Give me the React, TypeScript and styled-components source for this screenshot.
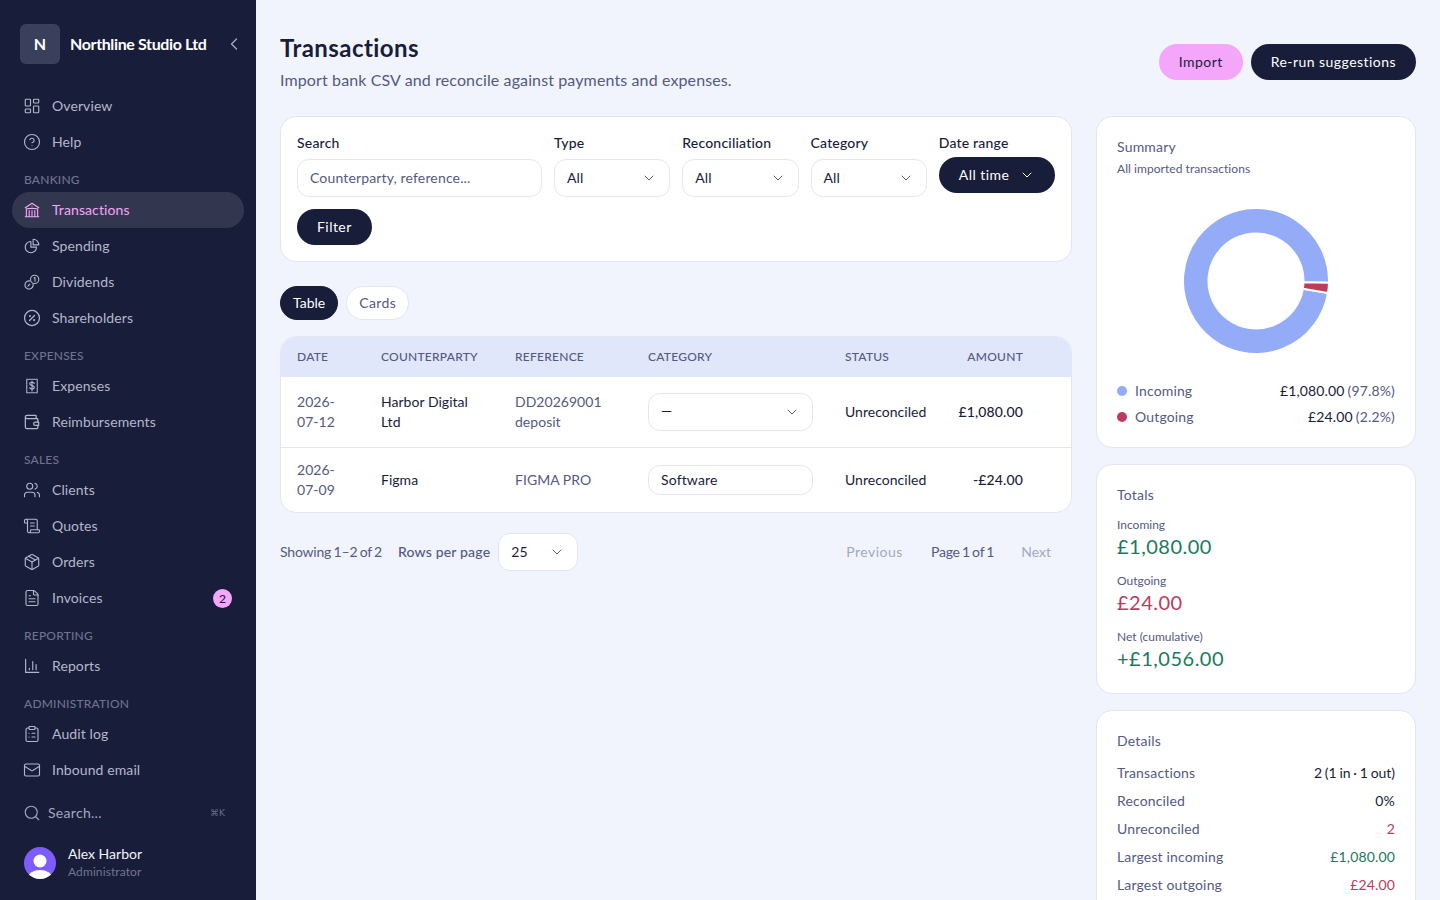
import React from "react";
import styled, { createGlobalStyle } from "styled-components";
import {
  ChevronDown,
  ChevronLeft,
  CircleHelp,
  ClipboardList,
  FileText,
  LayoutDashboard,
  Mail,
  Package,
  ScrollText,
  Search,
  Users,
} from "lucide-react";
import { HiOutlineBuildingLibrary, HiOutlineChartPie } from "react-icons/hi2";
import { TbDiscount, TbWallet } from "react-icons/tb";

const NAVY = "#181d3a";
const MUTED = "#545a82";
const LINE = "#e3e6f0";
const PINK = "#f3a6fa";
const GREEN = "#1b7a5c";
const RED = "#c03a5e";
const BLUE = "#94abf8";
const FONT = `"Lato", "Noto Sans", sans-serif`;

const Global = createGlobalStyle`
  html, body { margin: 0; height: 100%; overflow: hidden; }
  body {
    font-family: ${FONT};
    font-variant-ligatures: none;
    color: ${NAVY};
    background: #f1f4fc;
  }
  * { box-sizing: border-box; }
`;

const Shell = styled.div`
  display: flex;
  height: 900px;
  overflow: hidden;
`;

const Sidebar = styled.aside`
  width: 256px;
  flex: none;
  background: ${NAVY};
  padding: 24px 12px 0;
  display: flex;
  flex-direction: column;
`;

const Brand = styled.div`
  display: flex;
  align-items: center;
  gap: 10px;
  padding-left: 8px;
  height: 40px;
  margin-bottom: 24px;
`;

const BrandMark = styled.div`
  width: 40px;
  height: 40px;
  border-radius: 6px;
  background: #3a3f5c;
  color: #fff;
  font-weight: 700;
  font-size: 16px;
  display: flex;
  align-items: center;
  justify-content: center;
  padding-bottom: 2px;
`;

const BrandName = styled.div`
  flex: 1;
  color: #fff;
  font-weight: 700;
  font-size: 16px;
  letter-spacing: -0.37px;
  white-space: nowrap;
  padding-bottom: 2px;
`;

const Collapse = styled.span`
  display: flex;
  color: #a9acc0;
`;

const GroupLabel = styled.div`
  height: 16px;
  line-height: 16px;
  margin: 12px 0 4px;
  padding-left: 12px;
  color: #6f738d;
  font-size: 12px;
  font-weight: 500;
  letter-spacing: 0.2px;
`;

const NavItem = styled.a<{ $active?: boolean }>`
  display: flex;
  align-items: center;
  gap: 10px;
  height: 36px;
  padding: 0 12px 0 10px;
  border-radius: 18px;
  font-size: 14px;
  color: ${(p) => (p.$active ? PINK : "#b4b7c9")};
  background: ${(p) => (p.$active ? "#32374f" : "transparent")};
`;

const IconSlot = styled.span`
  width: 20px;
  height: 20px;
  flex: none;
  display: flex;
  align-items: center;
  justify-content: center;
`;

const NavText = styled.span`
  flex: 1;
  letter-spacing: 0.1px;
  padding-bottom: 2px;
`;

const Badge = styled.span`
  width: 19px;
  height: 19px;
  border-radius: 50%;
  background: ${PINK};
  color: ${NAVY};
  font-size: 12px;
  font-weight: 500;
  display: flex;
  align-items: center;
  justify-content: center;
`;

const SideSearch = styled.div`
  display: flex;
  align-items: center;
  gap: 6px;
  height: 26px;
  margin-top: 12px;
  padding: 0 19px 0 10px;
  color: #a4a7bb;
  font-size: 14px;
`;

const SearchText = styled.span`
  flex: 1;
  letter-spacing: 0.3px;
  padding-bottom: 2px;
`;

const Kbd = styled.span`
  color: #686c86;
  font-size: 9px;
  font-family: "DejaVu Sans", sans-serif;
`;

const User = styled.div`
  display: flex;
  align-items: center;
  gap: 12px;
  margin-top: 19px;
  padding-left: 12px;
`;

const UserName = styled.div`
  color: #f2f3f7;
  font-size: 14px;
  line-height: 18px;
`;

const UserRole = styled.div`
  color: #72768f;
  font-size: 12px;
  line-height: 16px;
  margin-top: 1px;
  letter-spacing: 0.1px;
`;

const Main = styled.main`
  flex: 1;
  min-width: 0;
  padding: 32px 24px 0;
`;

const Header = styled.header`
  display: flex;
  align-items: center;
  justify-content: space-between;
  margin-bottom: 24px;
`;

const Title = styled.h1`
  margin: 0;
  font-size: 24px;
  line-height: 32px;
  font-weight: 700;
  letter-spacing: 0.45px;
`;

const Subtitle = styled.p`
  margin: 4px 0 0;
  font-size: 16px;
  line-height: 24px;
  letter-spacing: 0.12px;
  color: ${MUTED};
`;

const Actions = styled.div`
  display: flex;
  gap: 8px;
`;

const Pill = styled.button<{ $tone?: "navy" | "pink" }>`
  height: 36px;
  padding: 0 20px 2px;
  border: 0;
  border-radius: 18px;
  font: 400 14px ${FONT};
  letter-spacing: 0.45px;
  white-space: nowrap;
  display: inline-flex;
  align-items: center;
  justify-content: space-between;
  background: ${(p) => (p.$tone === "pink" ? PINK : NAVY)};
  color: ${(p) => (p.$tone === "pink" ? NAVY : "#fff")};
  svg {
    margin-top: 2px;
  }
`;

const Columns = styled.div`
  display: grid;
  grid-template-columns: 792px 320px;
  gap: 24px;
  align-items: start;
`;

const Card = styled.section`
  background: #fff;
  border: 1px solid ${LINE};
  border-radius: 16px;
`;

const FilterCard = styled(Card)`
  padding: 16px;
  margin-bottom: 24px;
`;

const FilterGrid = styled.div`
  display: grid;
  grid-template-columns: 245px repeat(4, 1fr);
  gap: 12px;
  margin-bottom: 12px;
`;

const Field = styled.div<{ $gap?: number }>`
  display: flex;
  flex-direction: column;
  gap: ${(p) => p.$gap ?? 6}px;
`;

const Label = styled.label`
  font-size: 14px;
  line-height: 20px;
  font-weight: 500;
  letter-spacing: 0.2px;
`;

const Control = styled.div<{ $h?: number; $w?: number; $muted?: boolean }>`
  height: ${(p) => p.$h ?? 38}px;
  ${(p) => (p.$w ? `width: ${p.$w}px;` : "")}
  padding: 0 12px ${(p) => (p.$h ? 0 : 2)}px;
  border: 1px solid ${LINE};
  border-radius: 12px;
  background: #fff;
  font-size: 14px;
  letter-spacing: 0.15px;
  color: ${(p) => (p.$muted ? MUTED : NAVY)};
  display: flex;
  align-items: center;
  justify-content: space-between;
  svg {
    color: ${MUTED};
    flex: none;
    margin-top: 2px;
  }
`;

const Tabs = styled.div`
  display: flex;
  gap: 8px;
  margin-bottom: 16px;
`;

const Tab = styled.button<{ $on?: boolean }>`
  height: 34px;
  padding: 0 12px 2px;
  border-radius: 17px;
  border: 1px solid ${(p) => (p.$on ? NAVY : LINE)};
  background: ${(p) => (p.$on ? NAVY : "#fff")};
  color: ${(p) => (p.$on ? "#fff" : MUTED)};
  font: 14px ${FONT};
  letter-spacing: ${(p) => (p.$on ? 0 : 0.4)}px;
`;

const TableCard = styled(Card)`
  overflow: hidden;
  margin-bottom: 20px;
`;

const Grid = styled.table`
  width: 100%;
  table-layout: fixed;
  border-collapse: collapse;
  font-size: 14px;
  line-height: 20px;
`;

const Col = styled.col<{ $w: number }>`
  width: ${(p) => p.$w}px;
`;

const Th = styled.th<{ $right?: boolean }>`
  height: 40px;
  padding: 0 16px;
  background: #e1e7fb;
  color: ${MUTED};
  font-size: 12px;
  font-weight: 500;
  letter-spacing: 0.25px;
  text-align: ${(p) => (p.$right ? "right" : "left")};
`;

const Row = styled.tr<{ $h: number; $divider?: boolean }>`
  height: ${(p) => p.$h}px;
  td {
    border-top: ${(p) => (p.$divider ? `1px solid ${LINE}` : "0")};
  }
`;

const Td = styled.td<{ $right?: boolean; $muted?: boolean; $strong?: boolean }>`
  padding: 0 16px;
  letter-spacing: ${(p) => (p.$strong ? 0.12 : 0.03)}px;
  text-align: ${(p) => (p.$right ? "right" : "left")};
  color: ${(p) => (p.$muted ? MUTED : NAVY)};
  font-weight: ${(p) => (p.$strong ? 500 : 400)};
`;

const Pager = styled.div`
  display: flex;
  align-items: center;
  font-size: 14px;
  color: ${MUTED};
`;

const Showing = styled.span`
  word-spacing: -1px;
  letter-spacing: -0.2px;
  padding-bottom: 2px;
`;

const RowsLabel = styled.span`
  margin: 0 8px 0 16px;
  font-weight: 500;
  letter-spacing: 0.17px;
  padding-bottom: 2px;
`;

const PagerRight = styled.div`
  margin-left: auto;
  display: flex;
  align-items: center;
  padding: 0 21px 2px 0;
`;

const PagerLink = styled.span<{ $spacing: number }>`
  color: #a4a8c0;
  letter-spacing: ${(p) => p.$spacing}px;
`;

const PageOf = styled.span`
  margin: 0 27px 0 28px;
  word-spacing: -1.2px;
  letter-spacing: -0.2px;
`;

const Side = styled.div`
  display: flex;
  flex-direction: column;
  gap: 16px;
`;

const PanelCard = styled(Card)`
  padding: 20px;
`;

const PanelTitle = styled.div`
  font-size: 14px;
  line-height: 20px;
  color: ${MUTED};
  letter-spacing: 0.2px;
`;

const PanelSub = styled.div`
  font-size: 12px;
  line-height: 16px;
  margin-top: 4px;
  color: ${MUTED};
  letter-spacing: 0.05px;
`;

const Donut = styled.svg`
  display: block;
  margin: 32px auto 28px;
`;

const Legend = styled.div`
  display: flex;
  flex-direction: column;
  gap: 6px;
`;

const LegendRow = styled.div`
  display: flex;
  align-items: center;
  height: 20px;
  padding-bottom: 2px;
  font-size: 14px;
  letter-spacing: 0.15px;
  color: ${MUTED};
`;

const Dot = styled.span<{ $c: string }>`
  width: 10px;
  height: 10px;
  margin: 2px 8px 0 0;
  border-radius: 50%;
  background: ${(p) => p.$c};
`;

const LegendValue = styled.span`
  margin-left: auto;
  color: ${NAVY};
`;

const LegendPct = styled.span`
  margin-left: 3px;
  color: ${MUTED};
`;

const StatLabel = styled.div`
  font-size: 12px;
  line-height: 16px;
  color: ${MUTED};
  margin-top: 12px;
`;

const StatValue = styled.div<{ $c: string }>`
  font-size: 20px;
  line-height: 26px;
  padding-bottom: 2px;
  color: ${(p) => p.$c};
  letter-spacing: 0.5px;
`;

const DetailRow = styled.div`
  display: flex;
  justify-content: space-between;
  align-items: center;
  height: 28px;
  font-size: 14px;
  letter-spacing: 0.15px;
  color: ${MUTED};
`;

const DetailValue = styled.span<{ $c?: string; $tight?: boolean }>`
  color: ${(p) => p.$c ?? NAVY};
  ${(p) => (p.$tight ? "word-spacing: -0.7px; letter-spacing: -0.05px;" : "")}
`;

const DetailList = styled.div`
  margin-top: 7px;
`;

type IconProps = { size?: number };

const svgBase = {
  fill: "none",
  stroke: "currentColor",
  strokeWidth: 1.5,
  strokeLinecap: "round" as const,
  strokeLinejoin: "round" as const,
  viewBox: "0 0 24 24",
};

const DividendsIcon = ({ size = 18 }: IconProps) => (
  <svg width={size} height={size} {...svgBase}>
    <circle cx="15.500" cy="8.500" r="5.500" />
    <path d="M15 6.500l1-.5v5" />
    <path d="M9.400 10.600a5.500 5.500 0 1 0 4 4" />
    <path d="M6.500 17.500l2.500-2.500" />
  </svg>
);

const ReceiptIcon = ({ size = 18 }: IconProps) => (
  <svg width={size} height={size} {...svgBase}>
    <path d="M5 3h14v18H5z" strokeDasharray="2 1.200" />
    <path d="M15 8.500c-.5-1-1.600-1.500-3-1.500-1.700 0-3 .8-3 2.300 0 3 6 1.400 6 4.400 0 1.500-1.300 2.300-3 2.300-1.400 0-2.500-.5-3-1.500M12 5.500v13" />
  </svg>
);

const ReportsIcon = ({ size = 18 }: IconProps) => (
  <svg width={size} height={size} {...svgBase}>
    <path d="M3.500 3v17.500H21" />
    <path d="M8.500 15v2M13 6v11M17.500 10v7" />
  </svg>
);

const AvatarIcon = () => (
  <svg width="32" height="32" viewBox="0 0 32 32">
    <defs>
      <clipPath id="av">
        <circle cx="16" cy="16" r="16" />
      </clipPath>
    </defs>
    <g clipPath="url(#av)">
      <rect width="32" height="32" fill="#7c5cfa" />
      <circle cx="16" cy="14" r="6.500" fill="#fff" />
      <ellipse cx="16" cy="31" rx="12" ry="8" fill="#fff" />
    </g>
  </svg>
);

const point = (r: number, deg: number) => {
  const a = (deg * Math.PI) / 180;
  return `${(72 + r * Math.cos(a)).toFixed(2)} ${(72 + r * Math.sin(a)).toFixed(2)}`;
};

const ringSlice = (from: number, to: number) => {
  const big = to - from > 180 ? 1 : 0;
  return `M${point(73, from)}A73 73 0 ${big} 1 ${point(73, to)}L${point(47.5, to)}A47.5 47.5 0 ${big} 0 ${point(47.5, from)}Z`;
};

type NavEntry = { label: string; icon: React.ReactNode; active?: boolean; badge?: string };

const sz = 18;
const sw = 1.5;

const nav: { title?: string; items: NavEntry[] }[] = [
  {
    items: [
      { label: "Overview", icon: <LayoutDashboard size={sz} strokeWidth={sw} /> },
      { label: "Help", icon: <CircleHelp size={sz} strokeWidth={sw} /> },
    ],
  },
  {
    title: "BANKING",
    items: [
      { label: "Transactions", icon: <HiOutlineBuildingLibrary size={sz} />, active: true },
      { label: "Spending", icon: <HiOutlineChartPie size={sz} /> },
      { label: "Dividends", icon: <DividendsIcon /> },
      { label: "Shareholders", icon: <TbDiscount size={20} strokeWidth={sw} /> },
    ],
  },
  {
    title: "EXPENSES",
    items: [
      { label: "Expenses", icon: <ReceiptIcon /> },
      { label: "Reimbursements", icon: <TbWallet size={20} strokeWidth={sw} /> },
    ],
  },
  {
    title: "SALES",
    items: [
      { label: "Clients", icon: <Users size={sz} strokeWidth={sw} /> },
      { label: "Quotes", icon: <ScrollText size={sz} strokeWidth={sw} /> },
      { label: "Orders", icon: <Package size={sz} strokeWidth={sw} /> },
      { label: "Invoices", icon: <FileText size={sz} strokeWidth={sw} />, badge: "2" },
    ],
  },
  { title: "REPORTING", items: [{ label: "Reports", icon: <ReportsIcon /> }] },
  {
    title: "ADMINISTRATION",
    items: [
      { label: "Audit log", icon: <ClipboardList size={sz} strokeWidth={sw} /> },
      { label: "Inbound email", icon: <Mail size={sz} strokeWidth={sw} /> },
    ],
  },
];

const Chevron = () => <ChevronDown size={16} strokeWidth={1.5} />;

export default function App() {
  return (
    <Shell>
      <Global />
      <Sidebar>
        <Brand>
          <BrandMark>N</BrandMark>
          <BrandName>Northline Studio Ltd</BrandName>
          <Collapse>
            <ChevronLeft size={20} strokeWidth={1.5} />
          </Collapse>
        </Brand>
        {nav.map((group, i) => (
          <div key={i}>
            {group.title && <GroupLabel>{group.title}</GroupLabel>}
            {group.items.map((item) => (
              <NavItem key={item.label} $active={item.active}>
                <IconSlot>{item.icon}</IconSlot>
                <NavText>{item.label}</NavText>
                {item.badge && <Badge>{item.badge}</Badge>}
              </NavItem>
            ))}
          </div>
        ))}
        <SideSearch>
          <IconSlot>
            <Search size={18} strokeWidth={1.5} />
          </IconSlot>
          <SearchText>Search...</SearchText>
          <Kbd>⌘K</Kbd>
        </SideSearch>
        <User>
          <AvatarIcon />
          <div>
            <UserName>Alex Harbor</UserName>
            <UserRole>Administrator</UserRole>
          </div>
        </User>
      </Sidebar>

      <Main>
        <Header>
          <div>
            <Title>Transactions</Title>
            <Subtitle>Import bank CSV and reconcile against payments and expenses.</Subtitle>
          </div>
          <Actions>
            <Pill $tone="pink">Import</Pill>
            <Pill>Re-run suggestions</Pill>
          </Actions>
        </Header>

        <Columns>
          <div>
            <FilterCard>
              <FilterGrid>
                <Field>
                  <Label>Search</Label>
                  <Control $muted>Counterparty, reference...</Control>
                </Field>
                {["Type", "Reconciliation", "Category"].map((name) => (
                  <Field key={name}>
                    <Label>{name}</Label>
                    <Control>
                      All
                      <Chevron />
                    </Control>
                  </Field>
                ))}
                <Field $gap={4}>
                  <Label>Date range</Label>
                  <Pill>
                    All time
                    <Chevron />
                  </Pill>
                </Field>
              </FilterGrid>
              <Pill>Filter</Pill>
            </FilterCard>

            <Tabs>
              <Tab $on>Table</Tab>
              <Tab>Cards</Tab>
            </Tabs>

            <TableCard>
              <Grid>
                <colgroup>
                  <Col $w={84} />
                  <Col $w={134} />
                  <Col $w={133} />
                  <Col $w={197} />
                  <Col $w={113} />
                  <Col $w={97} />
                  <Col $w={32} />
                </colgroup>
                <thead>
                  <tr>
                    <Th>DATE</Th>
                    <Th>COUNTERPARTY</Th>
                    <Th>REFERENCE</Th>
                    <Th>CATEGORY</Th>
                    <Th>STATUS</Th>
                    <Th $right>AMOUNT</Th>
                    <Th />
                  </tr>
                </thead>
                <tbody>
                  <Row $h={70}>
                    <Td $muted>2026-07-12</Td>
                    <Td>Harbor Digital Ltd</Td>
                    <Td $muted>DD20269001 deposit</Td>
                    <Td>
                      <Control>
                        —
                        <Chevron />
                      </Control>
                    </Td>
                    <Td>Unreconciled</Td>
                    <Td $right $strong>£1,080.00</Td>
                    <Td />
                  </Row>
                  <Row $h={65} $divider>
                    <Td $muted>2026-07-09</Td>
                    <Td>Figma</Td>
                    <Td $muted>FIGMA PRO</Td>
                    <Td>
                      <Control $h={30}>Software</Control>
                    </Td>
                    <Td>Unreconciled</Td>
                    <Td $right $strong>-£24.00</Td>
                    <Td />
                  </Row>
                </tbody>
              </Grid>
            </TableCard>

            <Pager>
              <Showing>Showing 1–2 of 2</Showing>
              <RowsLabel>Rows per page</RowsLabel>
              <Control $w={80}>
                25
                <Chevron />
              </Control>
              <PagerRight>
                <PagerLink $spacing={0.5}>Previous</PagerLink>
                <PageOf>Page 1 of 1</PageOf>
                <PagerLink $spacing={0}>Next</PagerLink>
              </PagerRight>
            </Pager>
          </div>

          <Side>
            <PanelCard>
              <PanelTitle>Summary</PanelTitle>
              <PanelSub>All imported transactions</PanelSub>
              <Donut width="144" height="144" viewBox="0 0 144 144">
                <path d={ringSlice(9.4, 361.4)} fill={BLUE} stroke="#fff" strokeWidth="2" />
                <path d={ringSlice(1.4, 9.4)} fill={RED} stroke="#fff" strokeWidth="2" />
              </Donut>
              <Legend>
                <LegendRow>
                  <Dot $c={BLUE} />
                  Incoming
                  <LegendValue>£1,080.00</LegendValue>
                  <LegendPct>(97.8%)</LegendPct>
                </LegendRow>
                <LegendRow>
                  <Dot $c={RED} />
                  Outgoing
                  <LegendValue>£24.00</LegendValue>
                  <LegendPct>(2.2%)</LegendPct>
                </LegendRow>
              </Legend>
            </PanelCard>

            <PanelCard>
              <PanelTitle>Totals</PanelTitle>
              <StatLabel>Incoming</StatLabel>
              <StatValue $c={GREEN}>£1,080.00</StatValue>
              <StatLabel>Outgoing</StatLabel>
              <StatValue $c={RED}>£24.00</StatValue>
              <StatLabel>Net (cumulative)</StatLabel>
              <StatValue $c={GREEN}>+£1,056.00</StatValue>
            </PanelCard>

            <PanelCard>
              <PanelTitle>Details</PanelTitle>
              <DetailList>
                <DetailRow>
                  Transactions <DetailValue $tight>2 (1 in · 1 out)</DetailValue>
                </DetailRow>
                <DetailRow>
                  Reconciled <DetailValue>0%</DetailValue>
                </DetailRow>
                <DetailRow>
                  Unreconciled <DetailValue $c={RED}>2</DetailValue>
                </DetailRow>
                <DetailRow>
                  Largest incoming <DetailValue $c={GREEN}>£1,080.00</DetailValue>
                </DetailRow>
                <DetailRow>
                  Largest outgoing <DetailValue $c={RED}>£24.00</DetailValue>
                </DetailRow>
              </DetailList>
            </PanelCard>
          </Side>
        </Columns>
      </Main>
    </Shell>
  );
}
